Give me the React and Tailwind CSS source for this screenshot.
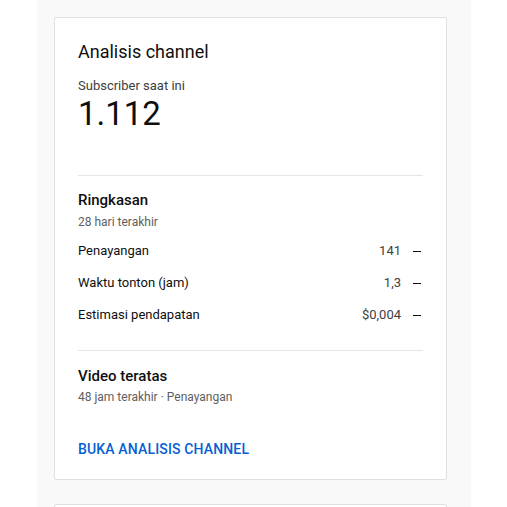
export default function App() {
  const rows = [
    { label: 'Penayangan', value: '141' },
    { label: 'Waktu tonton (jam)', value: '1,3' },
    { label: 'Estimasi pendapatan', value: '$0,004' },
  ];

  return (
    <div className="w-[507px] h-[507px] bg-white overflow-hidden font-['Roboto',sans-serif]">
      <div className="ml-[37px] w-[434px] h-full bg-[#f9f9f9] pt-[17px] pl-[17px]">
        <div className="w-[393px] bg-white border border-[#e0e0e0] rounded-[2px] px-[23px] pt-[22px] pb-[20px]">
          <h2 className="text-[18px] leading-6 text-[#0f0f0f]">Analisis channel</h2>
          <div className="mt-[13px] text-[13px] leading-[18px] text-[#3d3d3d]">Subscriber saat ini</div>
          <div className="text-[33px] leading-[38px] text-[#0f0f0f]">1.112</div>

          <div className="mt-[42px] border-t border-[#e5e5e5]" />

          <div className="pt-[14px]">
            <div className="text-[15px] leading-[20px] font-medium text-[#0f0f0f]">Ringkasan</div>
            <div className="mt-[3px] text-[12px] leading-[18px] text-[#606060]">28 hari terakhir</div>
            <div className="mt-[4px]">
              {rows.map((r) => (
                <div key={r.label} className="flex items-center h-[32px] text-[13px] text-[#0f0f0f]">
                  <span className="flex-1">{r.label}</span>
                  <span className="text-[#3d3d3d]">{r.value}</span>
                  <span className="ml-[12px] w-[8px] mr-[2px] border-t border-[#0f0f0f]" />
                </div>
              ))}
            </div>
          </div>

          <div className="mt-[19px] border-t border-[#e5e5e5]" />

          <div className="pt-[15px]">
            <div className="text-[15px] leading-[20px] font-medium text-[#0f0f0f]">Video teratas</div>
            <div className="mt-[2px] text-[12px] leading-[18px] text-[#606060]">48 jam terakhir · Penayangan</div>
          </div>

          <div className="mt-[33px] text-[14px] leading-[20px] font-medium tracking-[0.15px] text-[#065fd4]">
            BUKA ANALISIS CHANNEL
          </div>
        </div>
        <div className="mt-[24px] w-[393px] h-[40px] bg-white border border-[#e0e0e0] rounded-[2px]" />
      </div>
    </div>
  );
}
